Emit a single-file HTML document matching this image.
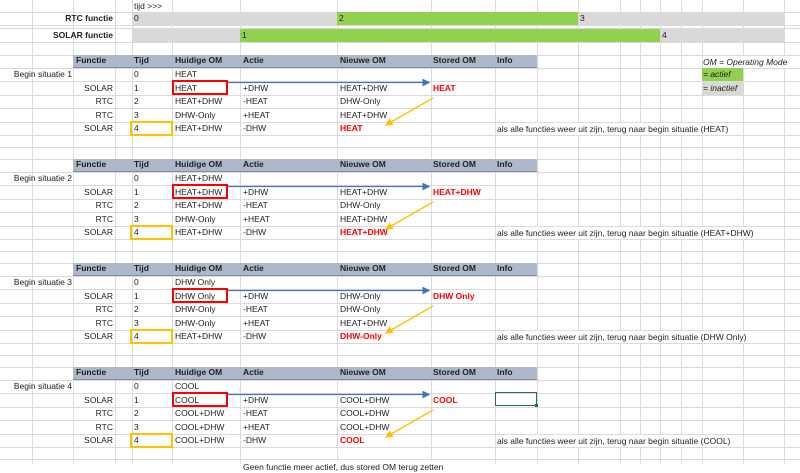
<!DOCTYPE html>
<html><head><meta charset="utf-8"><style>
body{margin:0;width:800px;height:464px;overflow:hidden;background:#fff;font-family:"Liberation Sans",sans-serif;font-size:8.5px;color:#222;position:relative}
.t{position:absolute;line-height:13px;white-space:nowrap}
.b{font-weight:bold}
.r{color:#f00;font-weight:bold}
.ra{text-align:right}
.w{background:#fff;height:12px;line-height:12px;margin-top:1px}
.blk{position:absolute;left:0;width:800px;height:104px}
.hd{position:absolute;left:73px;top:0;width:464px;height:12px;background:#adb9ca;border-bottom:1px solid #7f8ea6}
.i{font-style:italic}
</style></head><body>
<svg width="800" height="464" style="position:absolute;left:0;top:0">
<g stroke="#dadada" stroke-width="1">
<line x1="32.5" y1="0" x2="32.5" y2="464"/><line x1="73.5" y1="0" x2="73.5" y2="464"/><line x1="115.5" y1="0" x2="115.5" y2="464"/><line x1="132.5" y1="0" x2="132.5" y2="464"/><line x1="172.5" y1="0" x2="172.5" y2="464"/><line x1="240.5" y1="0" x2="240.5" y2="464"/><line x1="337.5" y1="0" x2="337.5" y2="464"/><line x1="431.5" y1="0" x2="431.5" y2="464"/><line x1="495.5" y1="0" x2="495.5" y2="464"/><line x1="537.5" y1="0" x2="537.5" y2="464"/><line x1="578.5" y1="0" x2="578.5" y2="464"/><line x1="620.5" y1="0" x2="620.5" y2="464"/><line x1="640.5" y1="0" x2="640.5" y2="464"/><line x1="660.5" y1="0" x2="660.5" y2="464"/><line x1="681.5" y1="0" x2="681.5" y2="464"/><line x1="702.5" y1="0" x2="702.5" y2="464"/><line x1="743.5" y1="0" x2="743.5" y2="464"/><line x1="784.5" y1="0" x2="784.5" y2="464"/>
<line x1="0" y1="12.5" x2="800" y2="12.5"/><line x1="0" y1="25.5" x2="800" y2="25.5"/><line x1="0" y1="28.5" x2="800" y2="28.5"/><line x1="0" y1="42.5" x2="800" y2="42.5"/>
<g id="hl"><line x1="0" y1="55.5" x2="800" y2="55.5"/><line x1="0" y1="68.5" x2="800" y2="68.5"/><line x1="0" y1="81.5" x2="800" y2="81.5"/><line x1="0" y1="95.5" x2="800" y2="95.5"/><line x1="0" y1="108.5" x2="800" y2="108.5"/><line x1="0" y1="122.5" x2="800" y2="122.5"/><line x1="0" y1="135.5" x2="800" y2="135.5"/><line x1="0" y1="147.5" x2="800" y2="147.5"/></g>
<use href="#hl" y="104"/><use href="#hl" y="208"/><use href="#hl" y="312"/>
</g>
</svg>
<div class="t" style="left:134px;top:0">tijd &gt;&gt;&gt;</div>
<div style="position:absolute;left:132px;top:12px;width:652px;height:13px;background:#d9d9d9"></div>
<div style="position:absolute;left:337px;top:12px;width:241px;height:13px;background:#92d050"></div>
<div style="position:absolute;left:132px;top:29px;width:652px;height:13px;background:#d9d9d9"></div>
<div style="position:absolute;left:240px;top:29px;width:420px;height:13px;background:#92d050"></div>
<div class="t b ra" style="left:0;width:113px;top:12px">RTC functie</div>
<div class="t b ra" style="left:0;width:113px;top:29px">SOLAR functie</div>
<div class="t" style="left:134px;top:12px">0</div><div class="t" style="left:339px;top:12px">2</div><div class="t" style="left:580px;top:12px">3</div>
<div class="t" style="left:242px;top:29px">1</div><div class="t" style="left:662px;top:29px">4</div>
<div class="t i w" style="left:703px;top:55px">OM = Operating Mode</div>
<div style="position:absolute;left:702px;top:68px;width:41px;height:13px;background:#92d050"></div>
<div class="t i" style="left:703px;top:68px">= actief</div>
<div style="position:absolute;left:702px;top:82px;width:41px;height:13px;background:#d9d9d9"></div>
<div class="t i" style="left:703px;top:82px">= inactief</div>

<div class="blk" style="top:55px">
<div class="hd"></div>
<div class="t b" style="left:76px;top:-1px">Functie</div><div class="t b" style="left:134px;top:-1px">Tijd</div><div class="t b" style="left:175px;top:-1px">Huidige OM</div><div class="t b" style="left:243px;top:-1px">Actie</div><div class="t b" style="left:340px;top:-1px">Nieuwe OM</div><div class="t b" style="left:433px;top:-1px">Stored OM</div><div class="t b" style="left:497px;top:-1px">Info</div>
<div class="t ra" style="left:0;width:72px;top:13px">Begin situatie 1</div>
<div class="t ra" style="left:74px;width:39px;top:26.5px">SOLAR</div><div class="t ra" style="left:74px;width:39px;top:40px">RTC</div><div class="t ra" style="left:74px;width:39px;top:53.5px">RTC</div><div class="t ra" style="left:74px;width:39px;top:67px">SOLAR</div>
<div class="t" style="left:134px;top:13px">0</div><div class="t" style="left:134px;top:26.5px">1</div><div class="t" style="left:134px;top:40px">2</div><div class="t" style="left:134px;top:53.5px">3</div><div class="t" style="left:134px;top:67px">4</div>
<div class="t" style="left:175px;top:13px">HEAT</div><div class="t" style="left:175px;top:26.5px">HEAT</div><div class="t" style="left:175px;top:40px">HEAT+DHW</div><div class="t" style="left:175px;top:53.5px">DHW-Only</div><div class="t" style="left:175px;top:67px">HEAT+DHW</div>
<div class="t" style="left:243px;top:26.5px">+DHW</div><div class="t" style="left:243px;top:40px">-HEAT</div><div class="t" style="left:243px;top:53.5px">+HEAT</div><div class="t" style="left:243px;top:67px">-DHW</div>
<div class="t" style="left:340px;top:26.5px">HEAT+DHW</div><div class="t" style="left:340px;top:40px">DHW-Only</div><div class="t" style="left:340px;top:53.5px">HEAT+DHW</div><div class="t r" style="left:340px;top:67px">HEAT</div>
<div class="t r" style="left:433px;top:27px">HEAT</div>
<div class="t w" style="left:497px;top:67px">als alle functies weer uit zijn, terug naar begin situatie (HEAT)</div>
</div>

<div class="blk" style="top:159px">
<div class="hd"></div>
<div class="t b" style="left:76px;top:-1px">Functie</div><div class="t b" style="left:134px;top:-1px">Tijd</div><div class="t b" style="left:175px;top:-1px">Huidige OM</div><div class="t b" style="left:243px;top:-1px">Actie</div><div class="t b" style="left:340px;top:-1px">Nieuwe OM</div><div class="t b" style="left:433px;top:-1px">Stored OM</div><div class="t b" style="left:497px;top:-1px">Info</div>
<div class="t ra" style="left:0;width:72px;top:13px">Begin situatie 2</div>
<div class="t ra" style="left:74px;width:39px;top:26.5px">SOLAR</div><div class="t ra" style="left:74px;width:39px;top:40px">RTC</div><div class="t ra" style="left:74px;width:39px;top:53.5px">RTC</div><div class="t ra" style="left:74px;width:39px;top:67px">SOLAR</div>
<div class="t" style="left:134px;top:13px">0</div><div class="t" style="left:134px;top:26.5px">1</div><div class="t" style="left:134px;top:40px">2</div><div class="t" style="left:134px;top:53.5px">3</div><div class="t" style="left:134px;top:67px">4</div>
<div class="t" style="left:175px;top:13px">HEAT+DHW</div><div class="t" style="left:175px;top:26.5px">HEAT+DHW</div><div class="t" style="left:175px;top:40px">HEAT+DHW</div><div class="t" style="left:175px;top:53.5px">DHW-Only</div><div class="t" style="left:175px;top:67px">HEAT+DHW</div>
<div class="t" style="left:243px;top:26.5px">+DHW</div><div class="t" style="left:243px;top:40px">-HEAT</div><div class="t" style="left:243px;top:53.5px">+HEAT</div><div class="t" style="left:243px;top:67px">-DHW</div>
<div class="t" style="left:340px;top:26.5px">HEAT+DHW</div><div class="t" style="left:340px;top:40px">DHW-Only</div><div class="t" style="left:340px;top:53.5px">HEAT+DHW</div><div class="t r" style="left:340px;top:67px">HEAT+DHW</div>
<div class="t r" style="left:433px;top:27px">HEAT+DHW</div>
<div class="t w" style="left:497px;top:67px">als alle functies weer uit zijn, terug naar begin situatie (HEAT+DHW)</div>
</div>

<div class="blk" style="top:263px">
<div class="hd"></div>
<div class="t b" style="left:76px;top:-1px">Functie</div><div class="t b" style="left:134px;top:-1px">Tijd</div><div class="t b" style="left:175px;top:-1px">Huidige OM</div><div class="t b" style="left:243px;top:-1px">Actie</div><div class="t b" style="left:340px;top:-1px">Nieuwe OM</div><div class="t b" style="left:433px;top:-1px">Stored OM</div><div class="t b" style="left:497px;top:-1px">Info</div>
<div class="t ra" style="left:0;width:72px;top:13px">Begin situatie 3</div>
<div class="t ra" style="left:74px;width:39px;top:26.5px">SOLAR</div><div class="t ra" style="left:74px;width:39px;top:40px">RTC</div><div class="t ra" style="left:74px;width:39px;top:53.5px">RTC</div><div class="t ra" style="left:74px;width:39px;top:67px">SOLAR</div>
<div class="t" style="left:134px;top:13px">0</div><div class="t" style="left:134px;top:26.5px">1</div><div class="t" style="left:134px;top:40px">2</div><div class="t" style="left:134px;top:53.5px">3</div><div class="t" style="left:134px;top:67px">4</div>
<div class="t" style="left:175px;top:13px">DHW Only</div><div class="t" style="left:175px;top:26.5px">DHW Only</div><div class="t" style="left:175px;top:40px">DHW-Only</div><div class="t" style="left:175px;top:53.5px">DHW-Only</div><div class="t" style="left:175px;top:67px">HEAT+DHW</div>
<div class="t" style="left:243px;top:26.5px">+DHW</div><div class="t" style="left:243px;top:40px">-HEAT</div><div class="t" style="left:243px;top:53.5px">+HEAT</div><div class="t" style="left:243px;top:67px">-DHW</div>
<div class="t" style="left:340px;top:26.5px">DHW-Only</div><div class="t" style="left:340px;top:40px">DHW-Only</div><div class="t" style="left:340px;top:53.5px">HEAT+DHW</div><div class="t r" style="left:340px;top:67px">DHW-Only</div>
<div class="t r" style="left:433px;top:27px">DHW Only</div>
<div class="t w" style="left:497px;top:67px">als alle functies weer uit zijn, terug naar begin situatie (DHW Only)</div>
</div>

<div class="blk" style="top:367px">
<div class="hd"></div>
<div class="t b" style="left:76px;top:-1px">Functie</div><div class="t b" style="left:134px;top:-1px">Tijd</div><div class="t b" style="left:175px;top:-1px">Huidige OM</div><div class="t b" style="left:243px;top:-1px">Actie</div><div class="t b" style="left:340px;top:-1px">Nieuwe OM</div><div class="t b" style="left:433px;top:-1px">Stored OM</div><div class="t b" style="left:497px;top:-1px">Info</div>
<div class="t ra" style="left:0;width:72px;top:13px">Begin situatie 4</div>
<div class="t ra" style="left:74px;width:39px;top:26.5px">SOLAR</div><div class="t ra" style="left:74px;width:39px;top:40px">RTC</div><div class="t ra" style="left:74px;width:39px;top:53.5px">RTC</div><div class="t ra" style="left:74px;width:39px;top:67px">SOLAR</div>
<div class="t" style="left:134px;top:13px">0</div><div class="t" style="left:134px;top:26.5px">1</div><div class="t" style="left:134px;top:40px">2</div><div class="t" style="left:134px;top:53.5px">3</div><div class="t" style="left:134px;top:67px">4</div>
<div class="t" style="left:175px;top:13px">COOL</div><div class="t" style="left:175px;top:26.5px">COOL</div><div class="t" style="left:175px;top:40px">COOL+DHW</div><div class="t" style="left:175px;top:53.5px">COOL+DHW</div><div class="t" style="left:175px;top:67px">COOL+DHW</div>
<div class="t" style="left:243px;top:26.5px">+DHW</div><div class="t" style="left:243px;top:40px">-HEAT</div><div class="t" style="left:243px;top:53.5px">+HEAT</div><div class="t" style="left:243px;top:67px">-DHW</div>
<div class="t" style="left:340px;top:26.5px">COOL+DHW</div><div class="t" style="left:340px;top:40px">COOL+DHW</div><div class="t" style="left:340px;top:53.5px">COOL+DHW</div><div class="t r" style="left:340px;top:67px">COOL</div>
<div class="t r" style="left:433px;top:27px">COOL</div>
<div class="t w" style="left:497px;top:67px">als alle functies weer uit zijn, terug naar begin situatie (COOL)</div>
<div style="position:absolute;left:495px;top:25px;width:40px;height:12px;border:1px solid #217346"></div>
<div style="position:absolute;left:535px;top:37px;width:3px;height:3px;background:#217346"></div>
</div>
<div class="t w" style="left:243px;top:460px">Geen functie meer actief, dus stored OM terug zetten</div>

<svg width="800" height="464" style="position:absolute;left:0;top:0">
<defs>
<marker id="ab" markerWidth="6" markerHeight="6" refX="5" refY="3" orient="auto"><path d="M0,0 L6,3 L0,6 z" fill="#4472c4"/></marker>
<marker id="ao" markerWidth="6" markerHeight="6" refX="5" refY="3" orient="auto"><path d="M0,0 L6,3 L0,6 z" fill="#ffc000"/></marker>
<g id="ov">
<rect x="173" y="81" width="54" height="13" fill="none" stroke="#f00" stroke-width="2"/>
<rect x="131" y="122" width="41" height="13" fill="none" stroke="#ffc000" stroke-width="2"/>
<line x1="228" y1="82.5" x2="429" y2="82.5" stroke="#4472c4" stroke-width="1.3" marker-end="url(#ab)"/>
<line x1="433" y1="98" x2="386" y2="125" stroke="#ffc000" stroke-width="1.3" marker-end="url(#ao)"/>
</g>
</defs>
<use href="#ov"/><use href="#ov" y="104"/><use href="#ov" y="208"/><use href="#ov" y="312"/>
</svg>
</body></html>
